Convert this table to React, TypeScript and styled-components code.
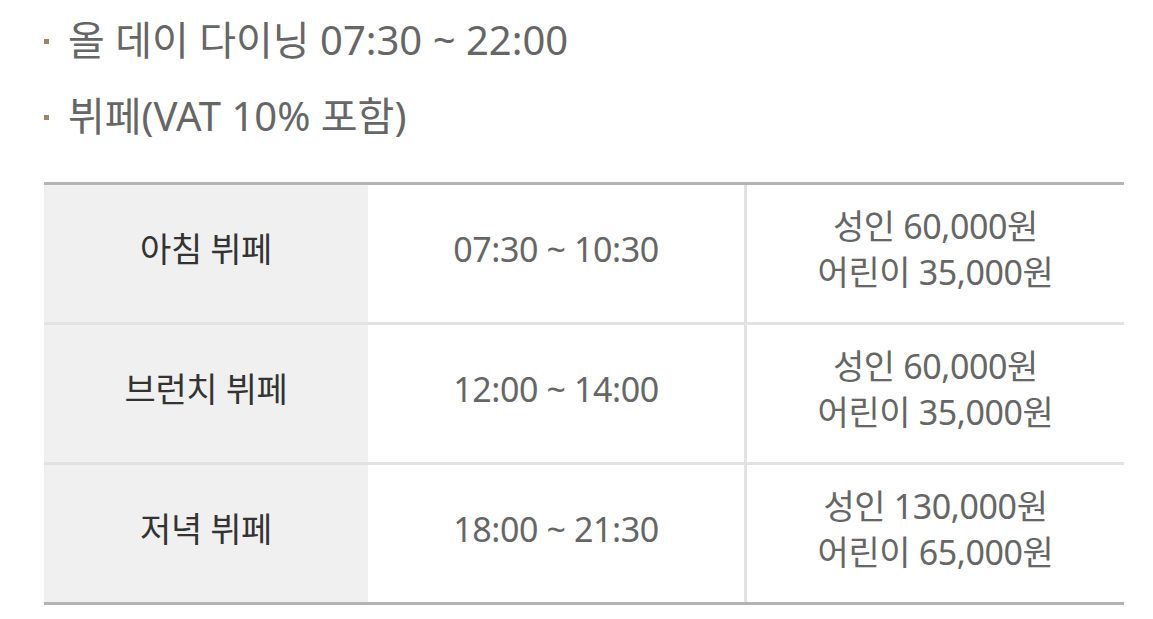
import React from "react";
import styled, { createGlobalStyle } from "styled-components";

const GlobalStyle = createGlobalStyle`
  html, body {
    margin: 0;
    padding: 0;
    background: #fff;
  }
  body {
    font-family: "Noto Sans", "Noto Sans CJK KR", sans-serif;
  }
`;

const Page = styled.div`
  width: 1153px;
  height: 619px;
  padding: 0 29px 0 44px;
  box-sizing: border-box;
  overflow: hidden;
`;

const InfoList = styled.ul`
  list-style: none;
  margin: 0;
  padding: 0;
  display: flex;
  flex-direction: column;
`;

const InfoItem = styled.li`
  display: flex;
  align-items: center;
  height: 76px;
  box-sizing: border-box;
  font-size: 40px;
  color: #666;
  letter-spacing: 0;

  &::before {
    content: "";
    flex: none;
    width: 5px;
    height: 5px;
    background: #9d8465;
    margin-right: 19px;
    margin-top: 6px;
  }
`;

const Table = styled.div`
  margin-top: 30px;
  border-top: 3px solid #b5b5b5;
  border-bottom: 3px solid #b3b3b3;
`;

const Row = styled.div`
  display: grid;
  grid-template-columns: 324px 376px 1fr;
  height: 137px;

  & + & {
    border-top: 3px solid #e2e2e2;
  }
`;

const Cell = styled.div<{ head?: boolean; divided?: boolean }>`
  display: flex;
  flex-direction: column;
  align-items: center;
  justify-content: center;
  padding-bottom: 10px;
  box-sizing: border-box;
  background: ${({ head }) => (head ? "#f0f0f0" : "#fff")};
  color: ${({ head }) => (head ? "#333" : "#666")};
  font-size: 34px;
  line-height: 46px;
  border-left: ${({ divided }) => (divided ? "3px solid #e2e2e2" : "none")};
  letter-spacing: -0.4px;
`;

const rows = [
  { name: "아침 뷔페", time: "07:30 ~ 10:30", adult: "60,000원", child: "35,000원" },
  { name: "브런치 뷔페", time: "12:00 ~ 14:00", adult: "60,000원", child: "35,000원" },
  { name: "저녁 뷔페", time: "18:00 ~ 21:30", adult: "130,000원", child: "65,000원" },
];

const App: React.FC = () => {
  return (
    <Page>
      <GlobalStyle />
      <InfoList>
        <InfoItem>올 데이 다이닝 07:30 ~ 22:00</InfoItem>
        <InfoItem>뷔페(VAT 10% 포함)</InfoItem>
      </InfoList>
      <Table>
        {rows.map((r) => (
          <Row key={r.name}>
            <Cell head>{r.name}</Cell>
            <Cell>{r.time}</Cell>
            <Cell divided>
              <span>성인 {r.adult}</span>
              <span>어린이 {r.child}</span>
            </Cell>
          </Row>
        ))}
      </Table>
    </Page>
  );
};

export default App;
